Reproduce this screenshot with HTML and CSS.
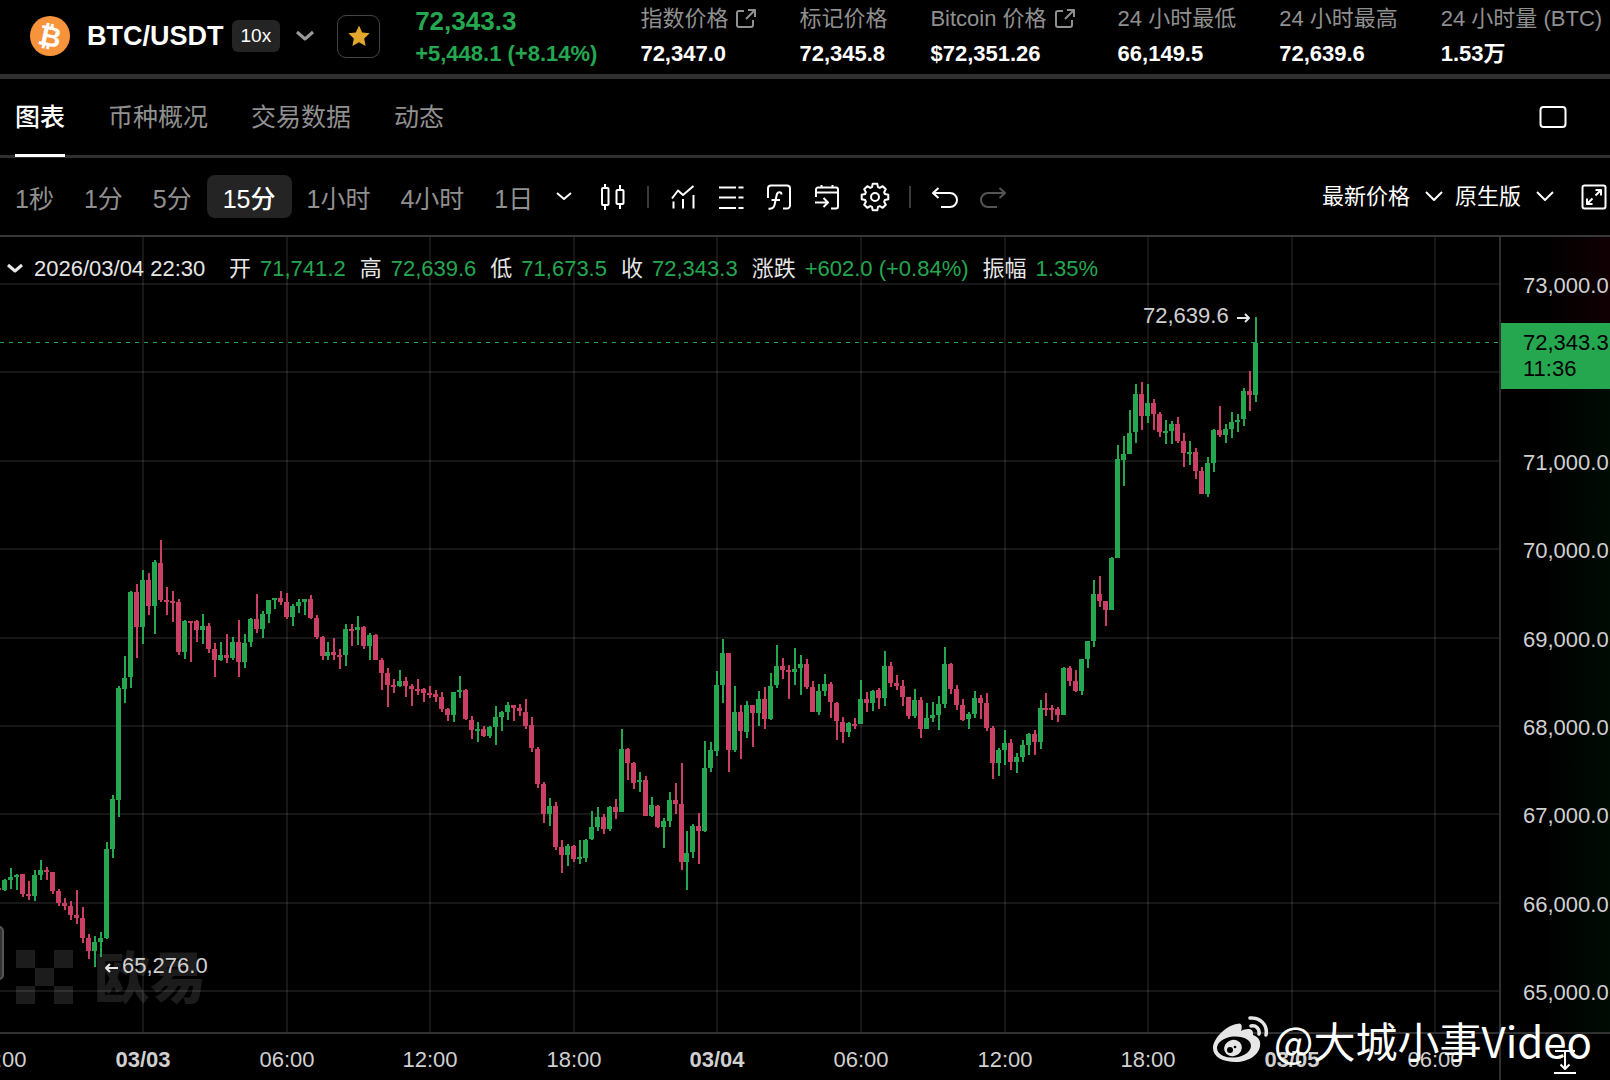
FILE: index.html
```html
<!doctype html>
<html lang="zh-CN">
  <head>
    <meta charset="utf-8">
    <title>BTC/USDT</title>
    <link rel="stylesheet" href="styles.css">
  </head>
  <body>
    <header class="ticker">
      <svg class="coin" viewBox="0 0 40 40">
        <circle cx="20" cy="20" r="20" fill="#f7933a"/>
        <text x="20" y="30" text-anchor="middle" transform="rotate(12 20 20)">₿</text>
      </svg>
      <h1>BTC/USDT</h1>
      <span class="leverage">10x</span>
      <button class="pair-toggle" aria-label="切换">
        <svg width="20" height="12" viewBox="0 0 20 12"><path d="M2 2l8 7 8-7"/></svg>
      </button>
      <button class="favorite" aria-label="收藏">
        <svg width="24" height="24" viewBox="0 0 24 24"><path d="M12 1.5l3.2 6.9 7.5.9-5.5 5.1 1.4 7.5-6.6-3.7-6.6 3.7 1.4-7.5L1.3 9.3l7.5-.9z"/></svg>
      </button>
      <div class="stats">
        <div class="stat last"><strong>72,343.3</strong><span>+5,448.1 (+8.14%)</span></div>
        <div class="stat"><a href="#">指数价格<svg class="ext" viewBox="0 0 20 20"><path d="M8 2H3a2 2 0 0 0-2 2v12a2 2 0 0 0 2 2h12a2 2 0 0 0 2-2v-5M12 1h7v7M19 1l-9 9"/></svg></a><b>72,347.0</b></div>
        <div class="stat"><span>标记价格</span><b>72,345.8</b></div>
        <div class="stat"><a href="#">Bitcoin 价格<svg class="ext" viewBox="0 0 20 20"><path d="M8 2H3a2 2 0 0 0-2 2v12a2 2 0 0 0 2 2h12a2 2 0 0 0 2-2v-5M12 1h7v7M19 1l-9 9"/></svg></a><b>$72,351.26</b></div>
        <div class="stat"><span>24 小时最低</span><b>66,149.5</b></div>
        <div class="stat"><span>24 小时最高</span><b>72,639.6</b></div>
        <div class="stat"><span>24 小时量 (BTC)</span><b>1.53万</b></div>
      </div>
    </header>

    <nav class="tabs">
      <a class="active" href="#">图表</a>
      <a href="#">币种概况</a>
      <a href="#">交易数据</a>
      <a href="#">动态</a>
      <button class="layout" aria-label="布局">
        <svg width="30" height="26" viewBox="0 0 30 26"><rect x="2.5" y="3" width="25" height="20" rx="3"/></svg>
      </button>
    </nav>

    <div class="toolbar">
      <div class="intervals">
        <button>1秒</button>
        <button>1分</button>
        <button>5分</button>
        <button class="active">15分</button>
        <button>1小时</button>
        <button>4小时</button>
        <button>1日</button>
      </div>
      <button class="more" aria-label="更多">
        <svg width="18" height="12" viewBox="0 0 18 12"><path d="M2 2l7 6 7-6"/></svg>
      </button>
      <button class="tool" aria-label="K线">
        <svg viewBox="0 0 30 30"><path d="M7 2v4M7 23v5M22 3v5M22 22v5"/><rect x="4" y="6" width="6.500" height="17" rx="1"/><rect x="18.500" y="8" width="7" height="14" rx="1"/></svg>
      </button>
      <i class="sep"></i>
      <button class="tool" aria-label="指标">
        <svg viewBox="0 0 30 30"><path d="M4 16.500l6-8 5 4.500 10.500-9M5.500 19.500v7M15 17v9.500M25.500 13v13.500"/></svg>
      </button>
      <button class="tool" aria-label="列表">
        <svg viewBox="0 0 30 30"><path d="M3 5.500h17M3 15.500h17M3 26h17M22.500 5.500h5M22.500 15.500h5M22.500 26h5"/></svg>
      </button>
      <button class="tool" aria-label="公式">
        <svg viewBox="0 0 30 30"><path d="M4 16V6.500a3 3 0 0 1 3-3h16a3 3 0 0 1 3 3v17a3 3 0 0 1-3 3h-4M17.500 12.500c0-3-4-3.200-4.700 0l-2.300 10.500c-.7 3-3.500 4.200-6 3.500M7.500 18h8.500"/></svg>
      </button>
      <button class="tool" aria-label="日期">
        <svg viewBox="0 0 30 30"><path d="M4 15V7.500a2 2 0 0 1 2-2h18a2 2 0 0 1 2 2v17a2 2 0 0 1-2 2h-5M4 10.500h22M9.500 3v3M20.500 3v3M3 20.500h12.500M11.500 16l4.500 4.500-4.500 4.500"/></svg>
      </button>
      <button class="tool" aria-label="设置">
        <svg viewBox="0 0 30 30"><path d="M12.700 1.700h4.600L18 5.100l1.800.8 2.900-1.700 3.100 3.100-1.700 2.900.8 1.800 3.400.7v4.600l-3.400.7-.8 1.800 1.700 2.900-3.100 3.100-2.900-1.700-1.800.8-.7 3.400h-4.600l-.7-3.400-1.800-.8-2.900 1.700-3.100-3.100 1.700-2.900-.8-1.800-3.400-.7v-4.600l3.400-.7.8-1.800-1.700-2.900 3.100-3.100 2.900 1.700 1.800-.8z"/><circle cx="15" cy="15" r="4"/></svg>
      </button>
      <i class="sep"></i>
      <button class="tool" aria-label="撤销">
        <svg viewBox="0 0 30 30"><path d="M8.500 6l-5.500 5 5.500 5M3 11h17a7 7 0 0 1 0 14h-9"/></svg>
      </button>
      <button class="tool" aria-label="重做" disabled>
        <svg viewBox="0 0 30 30"><path d="M21.500 6l5.500 5-5.500 5M27 11H10a7 7 0 0 0 0 14h9"/></svg>
      </button>
      <div class="options">
        <label><select aria-label="价格类型"><option>最新价格</option></select><svg width="18" height="12" viewBox="0 0 18 12"><path d="M1 1l8 8 8-8"/></svg></label>
        <label><select aria-label="图表版本"><option>原生版</option></select><svg width="18" height="12" viewBox="0 0 18 12"><path d="M1 1l8 8 8-8"/></svg></label>
        <button class="fullscreen" aria-label="全屏">
          <svg width="26" height="26" viewBox="0 0 26 26"><rect x="1.500" y="1.500" width="23" height="23" rx="2"/><path d="M14.500 6H20v5.500M20 6l-5.500 5.500M11.500 20H6v-5.500M6 20l5.500-5.500"/></svg>
        </button>
      </div>
    </div>

    <main class="chart">
      <div class="plot">
        <div class="brand">
          <svg width="57" height="54" viewBox="0 0 3 3" preserveAspectRatio="none"><path d="M0 0h1v1H0zM2 0h1v1H2zM1 1h1v1H1zM0 2h1v1H0zM2 2h1v1H2z"/></svg>
          <span>欧易</span>
        </div>
        <svg id="candles"></svg>
        <div class="legend">
          <button aria-label="收起"><svg width="18" height="12" viewBox="0 0 18 12"><path d="M2 2l7 6 7-6"/></svg></button>
          <time>2026/03/04 22:30</time>
          <span>开 <em>71,741.2</em></span>
          <span>高 <em>72,639.6</em></span>
          <span>低 <em>71,673.5</em></span>
          <span>收 <em>72,343.3</em></span>
          <span>涨跌 <em>+602.0 (+0.84%)</em></span>
          <span>振幅 <em>1.35%</em></span>
        </div>
        <button class="handle" aria-label="展开"></button>
      </div>
      <div class="prices">
        <svg id="prices"></svg>
        <div class="tag">72,343.3<br>11:36</div>
      </div>
      <div class="times"><svg id="times"></svg></div>
      <div class="corner">
        <button aria-label="自动缩放">
          <svg width="24" height="26" viewBox="0 0 24 26"><path d="M2 2h20M1 24h22M12 3v17M7.500 15.500l4.500 4.500 4.500-4.500"/></svg>
        </button>
      </div>
    </main>

    <div class="credit">
      <svg width="56" height="48" viewBox="0 0 56 48">
        <path fill="#e6e6e6" d="M24 8c4-2 6 1 4 7 6-3 13-3 12 4 5 2 8 5 7 11-1 9-12 16-24 16C10 46 0 41 0 32 0 22 14 9 24 8z"/>
        <ellipse cx="21" cy="31" rx="17" ry="10.500" fill="#000" transform="rotate(-6 21 31)"/>
        <ellipse cx="20" cy="32" rx="9" ry="8" fill="#e6e6e6" transform="rotate(-20 20 32)"/>
        <circle cx="17" cy="34" r="3" fill="#000"/><circle cx="22" cy="31" r="1.300" fill="#000"/>
        <path fill="none" stroke="#e6e6e6" stroke-width="3.500" stroke-linecap="round" d="M37 2c10-1 18 7 16 17M38 10c5-1 9 3 8 8"/>
      </svg>
      <span>@大城小事Video</span>
    </div>

    <script>
// high, body top, body bottom, low; one row per 15 minutes, starting 03/02 18:00
var up = 'u', down = 'd';
var candles = [
  [down,888,888,890,890],[up,879,880,890,891],[up,868,877,880,889],[up,874,875,877,890],
  [down,874,874,894,897],[down,881,894,896,900],[up,870,875,896,901],[up,860,870,875,880],
  [down,867,870,872,880],[down,872,872,891,894],[down,889,891,903,906],[down,898,903,906,910],
  [down,901,906,915,920],[down,890,915,918,924],[down,907,918,938,943],[down,934,938,951,959],
  [up,936,942,951,967],[up,932,938,942,957],[up,842,849,938,939],[up,795,799,849,858],
  [up,686,688,800,817],[up,656,678,689,703],[up,591,592,677,688],[down,584,592,627,658],
  [up,570,580,627,644],[down,573,580,606,615],[up,560,562,606,634],[down,540,563,600,602],
  [down,587,600,602,615],[down,591,601,603,622],[down,599,602,652,655],[up,620,621,652,659],
  [down,621,621,623,662],[down,620,621,630,642],[up,614,626,630,644],[down,623,626,649,653],
  [down,643,649,660,677],[up,642,655,660,661],[down,634,655,658,663],[up,637,642,658,660],
  [down,620,642,662,677],[up,634,643,662,668],[up,618,619,642,647],[down,594,619,629,633],
  [up,611,614,629,638],[up,600,600,614,623],[up,598,598,600,609],[down,591,598,602,605],
  [down,593,602,617,619],[up,604,606,617,626],[up,599,602,606,613],[up,599,599,602,615],
  [down,595,599,618,619],[down,615,618,637,639],[down,636,637,656,660],[up,642,652,656,660],
  [down,638,652,655,660],[down,649,655,657,669],[up,624,629,655,666],[down,624,629,631,646],
  [up,616,627,630,645],[down,626,627,646,649],[up,633,635,646,660],[down,634,635,660,660],
  [down,658,660,673,690],[down,668,673,685,707],[down,679,685,687,693],[up,670,681,686,687],
  [down,677,681,686,697],[down,684,686,689,706],[down,679,689,691,695],[down,688,689,693,702],
  [down,686,693,695,698],[down,690,694,697,702],[down,692,697,709,712],[down,708,709,715,721],
  [up,692,692,715,722],[up,676,690,692,698],[down,689,690,719,720],[down,716,720,730,739],
  [up,722,729,731,742],[down,726,729,736,737],[up,726,727,736,738],[up,706,717,727,745],
  [up,711,712,717,731],[up,702,705,712,720],[down,705,705,708,721],[down,704,708,711,716],
  [down,699,712,726,729],[down,717,725,748,752],[down,747,749,784,788],[down,782,784,814,823],
  [up,798,806,814,826],[down,802,806,847,850],[down,840,847,855,873],[up,844,846,855,866],
  [down,845,846,859,862],[up,840,857,859,864],[up,839,840,858,862],[up,811,827,839,840],
  [up,807,817,827,831],[down,814,817,829,834],[up,806,807,829,831],[down,799,807,812,819],
  [up,729,749,812,812],[down,748,749,763,780],[down,762,763,783,789],[up,772,780,782,792],
  [down,776,780,816,816],[up,797,805,816,817],[down,805,806,827,828],[up,818,821,827,848],
  [up,792,800,821,827],[down,783,800,804,814],[down,763,804,862,870],[up,831,853,862,890],
  [up,824,826,852,858],[down,813,826,831,864],[up,741,768,831,832],[up,742,750,768,772],
  [up,671,685,751,756],[up,639,653,685,703],[down,653,653,750,772],[up,686,712,750,752],
  [down,705,712,731,759],[up,701,705,732,738],[down,705,705,713,747],[up,691,699,713,726],
  [down,687,699,719,729],[up,673,686,719,720],[up,645,666,685,688],[down,658,666,670,679],
  [down,665,670,672,699],[up,648,669,672,685],[up,655,664,668,695],[down,659,664,687,689],
  [down,681,687,712,712],[up,684,691,712,715],[up,674,684,691,696],[down,682,684,702,718],
  [down,702,703,721,740],[down,717,722,732,743],[up,722,723,732,737],[down,718,724,726,729],
  [up,680,699,724,724],[down,692,699,703,712],[up,690,691,703,711],[down,688,690,698,709],
  [up,651,666,698,706],[down,662,666,683,687],[down,675,683,686,690],[down,680,686,697,706],
  [down,697,697,716,719],[up,689,700,716,718],[down,697,700,729,738],[up,703,718,729,729],
  [up,702,715,718,722],[up,696,704,715,730],[up,647,664,704,708],[down,663,664,689,694],
  [down,685,689,705,710],[down,699,705,720,721],[up,712,714,719,729],[up,691,698,714,718],
  [down,695,698,703,719],[down,693,703,728,731],[down,726,728,763,779],[up,748,750,763,776],
  [up,730,743,750,765],[down,739,743,762,770],[up,753,757,762,773],[up,740,745,757,762],
  [up,733,734,745,755],[down,730,734,742,755],[up,700,708,742,749],[down,693,708,710,716],
  [down,705,708,710,720],[down,707,709,715,722],[up,667,668,715,715],[down,666,668,681,686],
  [down,670,681,691,692],[up,659,659,691,695],[up,641,641,659,668],[up,580,594,641,647],
  [down,576,594,601,607],[down,601,601,610,626],[up,557,558,610,610],[up,445,459,558,558],
  [up,436,454,460,486],[up,410,433,454,454],[up,384,394,432,443],[down,382,394,416,430],
  [up,384,403,416,423],[down,399,403,414,430],[down,412,414,432,437],[up,420,431,433,444],
  [up,421,424,431,444],[down,417,424,441,443],[down,433,441,453,467],[up,441,452,454,465],
  [down,448,452,471,479],[down,467,471,494,494],[up,457,463,494,497],[up,429,430,463,472],
  [down,406,430,435,437],[up,424,429,435,443],[up,412,422,429,438],[up,414,420,422,432],
  [up,388,391,419,426],[down,371,391,395,411],[up,317,343,395,402]
];
var TOP = 237;
var STEP = 143.6 / 24;

function timeX(i) {
  return 143 + (i - 24) * STEP;
}
function priceY(price) {
  return 47 + (73000 - price) * 0.0884;
}
function add(parent, name, attrs, text) {
  var el = document.createElementNS('http://www.w3.org/2000/svg', name);
  for (var key in attrs) {
    el.setAttribute(key, attrs[key]);
  }
  if (text) {
    el.textContent = text;
  }
  parent.appendChild(el);
}

var plot = document.getElementById('candles');
var prices = document.getElementById('prices');
var times = document.getElementById('times');

for (var p = 73000; p >= 65000; p -= 1000) {
  var gy = Math.round(priceY(p));
  add(plot, 'rect', {'class': 'grid', x: 0, y: gy - 1, width: '100%', height: 2});
  // 72,000 is hidden by the last price tag
  if (p !== 72000) {
    add(prices, 'text', {x: 22, y: gy + 9}, p / 1000 + ',000.0');
  }
}

var hours = ['18:00', '03/03', '06:00', '12:00', '18:00', '03/04', '06:00', '12:00', '18:00', '03/05', '06:00'];
hours.forEach(function(label, n) {
  var gx = Math.round(timeX(n * 24));
  add(plot, 'rect', {'class': 'grid', x: gx - 1, y: 0, width: 2, height: '100%'});
  add(times, 'text', {x: gx, y: 33, 'class': label.indexOf('/') > 0 ? 'day' : 'hour'}, label);
});

add(plot, 'line', {'class': 'last-line', x1: 0, x2: '100%', y1: 105.5, y2: 105.5});

candles.forEach(function(c, i) {
  var x = Math.round(timeX(i));
  add(plot, 'rect', {'class': c[0], x: x - 1, y: c[1] - TOP, width: 2, height: c[4] - c[1]});
  add(plot, 'rect', {'class': c[0], x: x - 3, y: c[2] - TOP, width: 5, height: c[3] - c[2]});
});

add(plot, 'text', {x: 1143, y: 86}, '72,639.6');
add(plot, 'path', {'class': 'arrow', d: 'M1237 81h12M1245 77l4 4-4 4'});
add(plot, 'text', {x: 122, y: 736}, '65,276.0');
add(plot, 'path', {'class': 'arrow', d: 'M118 731h-12M110 727l-4 4 4 4'});
    </script>
  </body>
</html>
```

FILE: styles.css
```css
* {
  box-sizing: border-box;
}
html {
  background-color: #000;
  color: #fff;
  font-family: "Liberation Sans", "Noto Sans CJK SC", sans-serif;
  font-size: 22px;
}
body {
  position: relative;
  display: flex;
  flex-direction: column;
  margin: 0;
  height: 100vh;
  overflow: hidden;
  white-space: nowrap;
}
h1 {
  margin: 0;
  font-size: 27px;
}
a {
  color: inherit;
  text-decoration: none;
}
button, select {
  margin: 0;
  padding: 0;
  border: 0;
  background: none;
  color: inherit;
  font: inherit;
  cursor: pointer;
}
svg {
  display: block;
  flex: none;
  fill: none;
  stroke: currentColor;
  stroke-width: 2;
  stroke-linejoin: round;
}

/* header */
.ticker {
  display: flex;
  align-items: center;
  flex: none;
  height: 79px;
  padding: 0 0 2px 30px;
  border-bottom: 5px solid #303030;
}
.coin {
  width: 40px;
  height: 40px;
  margin-right: 17px;
  stroke: none;
}
.coin text {
  fill: #fff;
  font: bold 28px "DejaVu Sans", sans-serif;
}
.leverage {
  margin-left: 8px;
  padding: 0 9px;
  border-radius: 6px;
  background-color: #242424;
  font-size: 19px;
  line-height: 32px;
}
.pair-toggle {
  margin-left: 15px;
  color: #999;
}
.pair-toggle svg {
  stroke-width: 3;
}
.favorite {
  display: flex;
  align-items: center;
  justify-content: center;
  width: 43px;
  height: 43px;
  margin-left: 22px;
  border: 1px solid #444;
  border-radius: 9px;
}
.favorite svg {
  fill: #e3a82b;
  stroke: none;
}
.stats {
  display: flex;
  gap: 43px;
  margin-left: 35px;
}
.stat {
  color: #909090;
  line-height: 35px;
}
.stat > * {
  display: flex;
  align-items: center;
  height: 35px;
}
.stat b {
  color: #fff;
}
.last {
  color: #25a750;
  font-weight: bold;
}
.last strong {
  padding-top: 6px;
  font-size: 26px;
}
.ext {
  width: 20px;
  height: 20px;
  margin-left: 8px;
}

/* tabs */
.tabs {
  display: flex;
  flex: none;
  gap: 43px;
  height: 79px;
  padding: 0 42px 0 15px;
  border-bottom: 3px solid #303030;
  color: #909090;
  font-size: 25px;
  line-height: 76px;
}
.tabs .active {
  height: 78px;
  border-bottom: 3px solid #fff;
  color: #fff;
  font-weight: 500;
}
.layout {
  margin-left: auto;
  color: #fff;
}

/* toolbar */
.toolbar {
  display: flex;
  align-items: center;
  flex: none;
  height: 79px;
  padding-right: 3px;
  border-bottom: 2px solid #383838;
}
.intervals {
  display: flex;
  color: #909090;
  font-size: 25px;
}
.intervals button {
  height: 43px;
  padding: 0 15px;
}
.intervals .active {
  padding: 0 16px;
  border-radius: 8px;
  background-color: #242424;
  color: #fff;
  font-weight: 500;
}
.more {
  margin: 0 16px 0 7px;
}
.tool {
  width: 48px;
  padding: 0 9px;
}
.tool svg {
  width: 30px;
  height: 30px;
}
.tool:disabled {
  color: #555;
}
.sep {
  width: 2px;
  height: 22px;
  margin: 0 10px;
  background-color: #3a3a3a;
}
.options {
  display: flex;
  align-items: center;
  margin-left: auto;
}
.options label {
  display: flex;
  align-items: center;
  gap: 14px;
  margin-right: 12px;
}
.options select {
  appearance: none;
}
.fullscreen {
  margin-left: 15px;
}

/* chart */
.chart {
  display: grid;
  flex: 1;
  grid-template: 1fr 48px / 1fr 111px;
  min-height: 0;
}
.chart > div {
  position: relative;
  overflow: hidden;
}
#candles, #prices, #times {
  width: 100%;
  height: 100%;
  stroke: none;
  shape-rendering: crispEdges;
}
#candles {
  position: relative;
}
.chart text {
  fill: #d0d0d0;
}
.chart .grid {
  fill: #fff;
  fill-opacity: .09;
}
.u {
  fill: #25a750;
}
.d {
  fill: #ca3f64;
}
.last-line {
  stroke: #25a750;
  stroke-width: 1;
  stroke-dasharray: 4 5;
}
.chart .arrow {
  stroke: #e6e6e6;
  shape-rendering: auto;
}
.prices {
  border-left: 2px solid #303030;
  background: linear-gradient(to right, #000 40%, #000b04);
}
.prices::before {
  content: "";
  position: absolute;
  inset: 0 0 auto;
  height: 86px;
  background: linear-gradient(to right, #000 40%, #100003);
}
#prices {
  position: relative;
}
.tag {
  position: absolute;
  top: 86px;
  left: 0;
  right: 0;
  padding: 7px 0 7px 22px;
  background-color: #25a750;
  color: #000;
  line-height: 26px;
}
.times, .corner {
  border-top: 2px solid #303030;
}
.times text {
  text-anchor: middle;
}
.times .day {
  font-weight: bold;
}
.corner {
  border-left: 2px solid #303030;
}
.corner button {
  margin: 15px 0 0 52px;
}

.legend {
  position: absolute;
  top: 18px;
  left: 6px;
  display: flex;
  align-items: center;
  gap: 14px;
  color: #e6e6e6;
  line-height: 27px;
}
.legend button {
  margin-right: -4px;
}
.legend svg {
  stroke-width: 3;
}
.legend time {
  min-width: 181px;
}
.legend span {
  display: flex;
  gap: 9px;
}
.legend em {
  color: #25a750;
  font-style: normal;
}
.brand {
  position: absolute;
  bottom: 20px;
  left: 16px;
  display: flex;
  align-items: center;
  gap: 21px;
  height: 70px;
  color: #1c1c1c;
  font-size: 56px;
  font-weight: 900;
}
.brand svg {
  fill: currentColor;
  stroke: none;
}
.brand span {
  padding-bottom: 8px;
}
.handle {
  position: absolute;
  bottom: 52px;
  left: -6px;
  width: 10px;
  height: 54px;
  border: 2px solid #555;
  border-radius: 6px;
  background-color: #333;
}

.credit {
  position: absolute;
  right: 15px;
  bottom: 10px;
  display: flex;
  align-items: center;
  gap: 5px;
  font: 42px/60px "Noto Sans CJK SC", sans-serif;
  pointer-events: none;
}
.credit svg {
  stroke: none;
}
.credit span {
  margin-right: 3px;
}
```
